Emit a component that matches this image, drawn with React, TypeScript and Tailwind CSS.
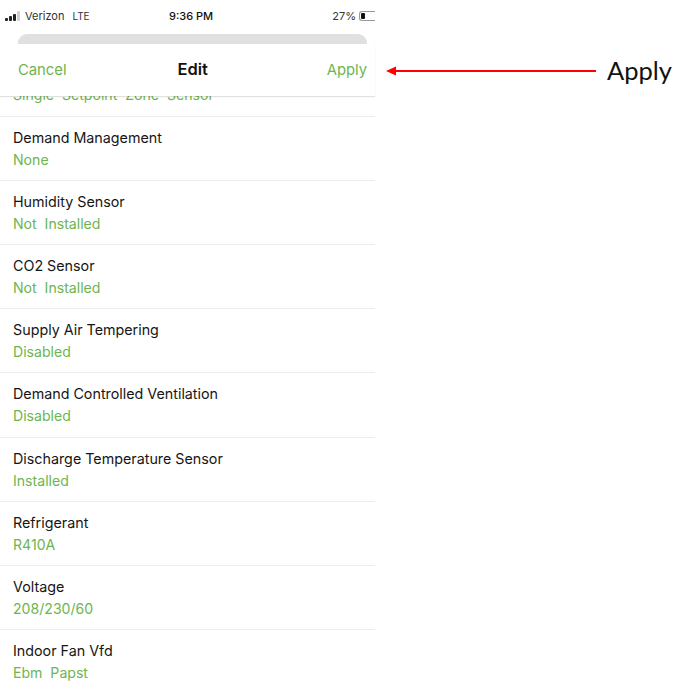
import React from "react";

const rows: [string, string][] = [
  ["Demand Management", "None"],
  ["Humidity Sensor", "Not  Installed"],
  ["CO2 Sensor", "Not  Installed"],
  ["Supply Air Tempering", "Disabled"],
  ["Demand Controlled Ventilation", "Disabled"],
  ["Discharge Temperature Sensor", "Installed"],
  ["Refrigerant", "R410A"],
  ["Voltage", "208/230/60"],
  ["Indoor Fan Vfd", "Ebm  Papst"],
];

function Row({ value, label }: { label?: string; value: string }) {
  return (
    <div className="h-[64.2px] shrink-0 pl-[13px] pt-[10px] border-b border-[#ececec] flex flex-col">
      <div className="text-[14.3px] leading-[22px] text-[#161616]">{label}&nbsp;</div>
      <div className="text-[14.1px] leading-[22px] text-[#6db54f] whitespace-pre">{value}</div>
    </div>
  );
}

export default function App() {
  return (
    <div className="h-[681px] w-[696px] overflow-hidden bg-white flex font-['Inter','Liberation_Sans',sans-serif]">
      <div className="w-[375px] shrink-0 flex flex-col">
        <div className="h-[34px] shrink-0 relative z-10 bg-white flex items-center pl-[5px] text-[11px] text-[#333]">
          <div className="flex items-end gap-[1px] w-[20px] h-[10px] mb-[2px]">
            <span className="w-[3px] h-[3px] bg-[#222] rounded-[1px]" />
            <span className="w-[3px] h-[5px] bg-[#222] rounded-[1px]" />
            <span className="w-[3px] h-[7px] bg-[#222] rounded-[1px]" />
            <span className="w-[3px] h-[10px] bg-[#cfcfcf] rounded-[1px]" />
          </div>
          <span className="mb-[2px]">Verizon</span>
          <span className="ml-[8px] mb-[2px] text-[10px]">LTE</span>
          <span className="absolute left-[169px] top-[8px] font-medium text-[#111]">9:36 PM</span>
          <span className="ml-auto mb-[2px] mr-[3px]">27%</span>
          <div className="w-[16px] h-[10px] mb-[2px] border border-r-0 border-[#999] rounded-l-[3px] p-[1px] flex">
            <span className="w-[4px] h-full bg-[#111] rounded-[1px]" />
          </div>
        </div>
        <div className="relative z-10 shrink-0 bg-white pl-[18px] pr-[8px] h-[10px]">
          <div className="h-[10px] bg-[#e0e0e0] rounded-t-[9px]" />
        </div>
        <div className="relative z-10 shrink-0 h-[52px] bg-white flex items-center justify-between pl-[18px] pr-[8px] shadow-[0_1px_1px_rgba(0,0,0,0.12)] text-[14.8px]">
          <span className="text-[#6db54f]">Cancel</span>
          <span className="text-[#111] text-[16.5px] font-semibold mr-[8px] -mt-[1px]">Edit</span>
          <span className="text-[#6db54f]">Apply</span>
        </div>
        <div className="-mt-[43.6px] shrink-0 flex flex-col">
          <Row value="Single  Setpoint  Zone  Sensor" />
          {rows.map(([l, v]) => (
            <Row key={l} label={l} value={v} />
          ))}
        </div>
      </div>
      <div className="flex-1 flex items-start pt-[52px]">
        <svg width="210" height="38" viewBox="0 0 210 38" className="ml-[11px] shrink-0">
          <line x1="8" y1="19" x2="210" y2="19" stroke="#ff0000" strokeWidth="2" />
          <polygon points="0,19 10,14.5 10,23.5" fill="#ff0000" />
        </svg>
        <span className="ml-[11px] -mt-[1px] text-[25.5px] leading-[38px] text-[#111] font-['Lato',sans-serif]">Apply</span>
      </div>
    </div>
  );
}
